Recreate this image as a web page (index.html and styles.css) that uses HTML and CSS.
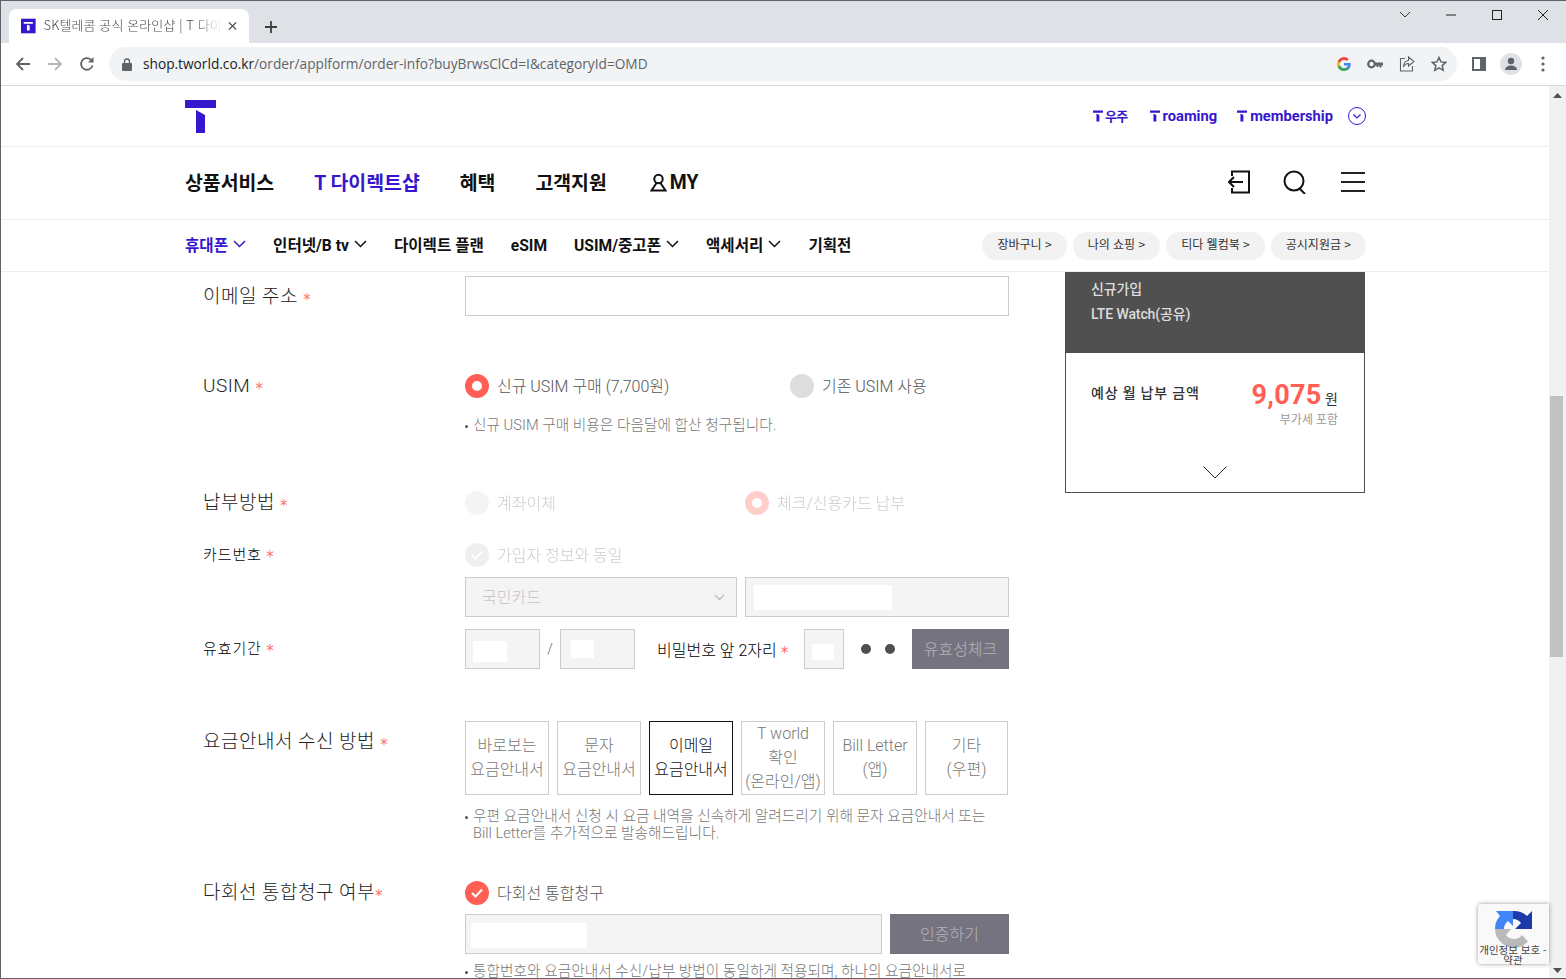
FILE: index.html
```html
<!DOCTYPE html>
<html lang="ko">
<head>
    <meta charset="UTF-8">
    <meta name="viewport" content="width=device-width, initial-scale=1.0">
    <title>SK텔레콤 공식 온라인샵</title>
    <link rel="stylesheet" href="styles.css">
</head>
<body>
    <div class="window">
        <!-- Browser tabs -->
        <div class="tabstrip">
            <div class="tab">
                <svg class="favicon" width="16" height="16" viewBox="0 0 16 16"><rect width="16" height="16" fill="#3617ce"/><path d="M3 3.5h10v2H3zM6.5 6.5l3 1V13h-3z" fill="#fff"/></svg>
                <span class="tab-title">SK텔레콤 공식 온라인샵 | T 다이</span>
                <svg class="tab-close" width="10" height="10" viewBox="0 0 10 10"><path d="M1 1l8 8M9 1l-8 8" stroke="#45484c" stroke-width="1.4"/></svg>
            </div>
            <svg class="new-tab" width="12" height="12" viewBox="0 0 12 12"><path d="M6 0v12M0 6h12" stroke="#3c4043" stroke-width="1.8"/></svg>
            <div class="win-controls">
                <svg width="12" height="8" viewBox="0 0 12 8"><path d="M1 1l5 5 5-5" fill="none" stroke="#333" stroke-width="1"/></svg>
                <svg width="12" height="2" viewBox="0 0 12 2"><path d="M1 1h10" stroke="#222" stroke-width="1"/></svg>
                <svg width="12" height="12" viewBox="0 0 12 12"><rect x="1.5" y="1.5" width="9" height="9" fill="none" stroke="#222" stroke-width="1"/></svg>
                <svg width="12" height="12" viewBox="0 0 12 12"><path d="M1 1l10 10M11 1L1 11" stroke="#222" stroke-width="1"/></svg>
            </div>
        </div>

        <!-- Address bar -->
        <div class="toolbar">
            <div class="nav-btns">
                <svg width="16" height="16" viewBox="0 0 16 16"><path d="M15 8H2M8 2L2 8l6 6" fill="none" stroke="#5f6368" stroke-width="1.8"/></svg>
                <svg width="16" height="16" viewBox="0 0 16 16"><path d="M1 8h13M8 2l6 6-6 6" fill="none" stroke="#b4b6b9" stroke-width="1.8"/></svg>
                <svg width="16" height="16" viewBox="0 0 16 16"><path d="M13.5 9.5A5.8 5.8 0 1 1 12 3.8" fill="none" stroke="#5f6368" stroke-width="1.8"/><path d="M14.5 1v5.5H9z" fill="#5f6368"/></svg>
            </div>
            <div class="omnibox">
                <svg width="10" height="13" viewBox="0 0 10 13"><path d="M2.5 5V3.5a2.5 2.5 0 0 1 5 0V5" fill="none" stroke="#5f6368" stroke-width="1.3"/><rect y="5" width="10" height="8" rx="1" fill="#5f6368"/></svg>
                <span class="url"><b>shop.tworld.co.kr</b>/order/applform/order-info?buyBrwsClCd=I&amp;categoryId=OMD</span>
                <div class="omni-icons">
                    <svg width="14" height="14" viewBox="0 0 14 14"><path d="M13.7 7.2c0-.5 0-.9-.1-1.300H7v2.500h3.800a3.200 3.200 0 0 1-1.400 2.100v1.700h2.300c1.300-1.200 2-3 2-5z" fill="#4285f4"/><path d="M7 14c1.900 0 3.500-.6 4.700-1.700l-2.300-1.800c-.6.400-1.400.7-2.400.7-1.800 0-3.400-1.200-3.900-2.900H.7v1.800A7 7 0 0 0 7 14z" fill="#34a853"/><path d="M3.100 8.300a4.200 4.200 0 0 1 0-2.600V3.900H.7a7 7 0 0 0 0 6.200z" fill="#fbbc05"/><path d="M7 2.800c1 0 2 .4 2.700 1.100l2-2A7 7 0 0 0 .7 3.900l2.400 1.800C3.600 4 5.200 2.800 7 2.800z" fill="#ea4335"/></svg>
                    <svg width="16" height="10" viewBox="0 0 16 10"><circle cx="4.500" cy="5" r="3.300" fill="none" stroke="#5f6368" stroke-width="2.200"/><path d="M8 3.500h8v3h-1.500v2h-2v-2h-1v1.500H9.500V6.500H8z" fill="#5f6368"/></svg>
                    <svg width="16" height="16" viewBox="0 0 16 16"><path d="M6 2.500H1.500v12.500h12V10" fill="none" stroke="#5f6368" stroke-width="1.100"/><path d="M9.500 1l5.500 4.500-5.500 4.500V7.500C7 7.500 5.500 8.500 4.500 11c0-4 2-6.500 5-6.500z" fill="none" stroke="#5f6368" stroke-width="1.100"/></svg>
                    <svg width="16" height="16" viewBox="0 0 16 16"><path d="M8 1.500l2 4.400 4.700.5-3.500 3.200 1 4.700L8 11.900l-4.200 2.400 1-4.700L1.300 6.400 6 5.900z" fill="none" stroke="#5f6368" stroke-width="1.500"/></svg>
                </div>
            </div>
            <div class="tool-icons">
                <svg width="14" height="14" viewBox="0 0 14 14"><rect x="1" y="1" width="12" height="12" fill="none" stroke="#5f6368" stroke-width="2"/><rect x="8" y="1" width="5" height="12" fill="#5f6368"/></svg>
                <span class="avatar"><svg width="14" height="14" viewBox="0 0 14 14"><circle cx="7" cy="4" r="3.200" fill="#5f6368"/><path d="M1 13c0-3 3-4.500 6-4.500s6 1.500 6 4.500z" fill="#5f6368"/></svg></span>
                <svg width="4" height="16" viewBox="0 0 4 16"><circle cx="2" cy="2" r="1.600" fill="#5f6368"/><circle cx="2" cy="8" r="1.600" fill="#5f6368"/><circle cx="2" cy="14" r="1.600" fill="#5f6368"/></svg>
            </div>
        </div>

        <div class="viewport">
            <div class="site">
                <!-- Site header -->
                <div class="top-bar">
                    <div class="wrap top-inner">
                        <svg class="logo" width="31" height="33" viewBox="0 0 31 33"><path d="M0 0h31v8H0zM11 10l9 5v18h-9z" fill="#3617ce"/></svg>
                        <div class="brand-links">
                            <a class="link-uju"><svg width="10" height="12" viewBox="0 0 11 12"><path d="M0 0h11v2.500H0zM3.800 3.500l3.200 1.500v7H3.800z" fill="#3617ce"/></svg><span class="ko">우주</span></a>
                            <a><svg width="10" height="12" viewBox="0 0 11 12"><path d="M0 0h11v2.500H0zM3.800 3.500l3.200 1.500v7H3.800z" fill="#3617ce"/></svg>roaming</a>
                            <a><svg width="10" height="12" viewBox="0 0 11 12"><path d="M0 0h11v2.500H0zM3.800 3.500l3.200 1.500v7H3.800z" fill="#3617ce"/></svg>membership</a>
                            <svg class="more" width="18" height="18" viewBox="0 0 18 18"><circle cx="9" cy="9" r="8.500" fill="none" stroke="#3617ce"/><path d="M5.500 7.500L9 11l3.500-3.500" fill="none" stroke="#3617ce" stroke-width="1.200"/></svg>
                        </div>
                    </div>
                </div>

                <div class="gnb">
                    <div class="wrap gnb-inner">
                        <nav class="gnb-menu">
                            <a>상품서비스</a>
                            <a class="on">T 다이렉트샵</a>
                            <a>혜택</a>
                            <a>고객지원</a>
                            <a class="my"><svg width="17" height="19" viewBox="0 0 17 19"><circle cx="8.500" cy="6" r="4.200" fill="none" stroke="#111" stroke-width="2"/><path d="M6.500 10L1.500 17.500h14L10.500 10" fill="none" stroke="#111" stroke-width="2"/></svg>MY</a>
                        </nav>
                        <div class="gnb-icons">
                            <svg width="22" height="24" viewBox="0 0 22 24"><path d="M4 6V1.500h17v21H4V18" fill="none" stroke="#111" stroke-width="2"/><path d="M15 12H1.500M6 7l-5 5 5 5" fill="none" stroke="#111" stroke-width="2"/></svg>
                            <svg width="24" height="24" viewBox="0 0 24 24"><circle cx="11" cy="11" r="9.500" fill="none" stroke="#111" stroke-width="2"/><path d="M16 18l6 6" stroke="#111" stroke-width="2"/></svg>
                            <svg width="24" height="20" viewBox="0 0 24 20"><path d="M0 1h24M0 10h24M0 19h24" stroke="#222" stroke-width="2"/></svg>
                        </div>
                    </div>
                </div>

                <div class="sub-nav">
                    <div class="wrap sub-inner">
                        <nav class="sub-menu">
                            <a class="on">휴대폰<svg width="13" height="8" viewBox="0 0 13 8"><path d="M1 1l5.500 5.500L12 1" fill="none" stroke="#3617ce" stroke-width="1.500"/></svg></a>
                            <a>인터넷/B tv<svg width="13" height="8" viewBox="0 0 13 8"><path d="M1 1l5.500 5.500L12 1" fill="none" stroke="#111" stroke-width="1.500"/></svg></a>
                            <a>다이렉트 플랜</a>
                            <a class="esim">eSIM</a>
                            <a>USIM/중고폰<svg width="13" height="8" viewBox="0 0 13 8"><path d="M1 1l5.500 5.500L12 1" fill="none" stroke="#111" stroke-width="1.500"/></svg></a>
                            <a>액세서리<svg width="13" height="8" viewBox="0 0 13 8"><path d="M1 1l5.500 5.500L12 1" fill="none" stroke="#111" stroke-width="1.500"/></svg></a>
                            <a>기획전</a>
                        </nav>
                        <div class="pills">
                            <a class="pill">장바구니 &gt;</a>
                            <a class="pill">나의 쇼핑 &gt;</a>
                            <a class="pill">티다 웰컴북 &gt;</a>
                            <a class="pill">공시지원금 &gt;</a>
                        </div>
                    </div>
                </div>

                <!-- Order form -->
                <div class="wrap content">
                    <div class="form">
                        <div class="row row-email">
                            <div class="label">이메일 주소 <i>*</i></div>
                            <div class="field"><div class="input tall"></div></div>
                        </div>

                        <div class="row row-usim">
                            <div class="label">USIM <i>*</i></div>
                            <div class="field">
                                <div class="radios wide">
                                    <span class="radio"><span class="dot on"></span>신규 USIM 구매 (7,700원)</span>
                                    <span class="radio"><span class="dot off"></span>기존 USIM 사용</span>
                                </div>
                                <p class="note note-usim">신규 USIM 구매 비용은 다음달에 합산 청구됩니다.</p>
                            </div>
                        </div>

                        <div class="row row-pay">
                            <div class="label">납부방법 <i>*</i></div>
                            <div class="field">
                                <div class="radios narrow disabled">
                                    <span class="radio"><span class="dot off"></span>계좌이체</span>
                                    <span class="radio"><span class="dot on"></span>체크/신용카드 납부</span>
                                </div>
                            </div>
                        </div>

                        <div class="row row-card">
                            <div class="label small">카드번호 <i>*</i></div>
                            <div class="field">
                                <div class="radios disabled">
                                    <span class="radio"><span class="dot check"><svg width="14" height="12" viewBox="0 0 14 12"><path d="M2 6l3.500 3.500L12 2.500" fill="none" stroke="#fff" stroke-width="2"/></svg></span>가입자 정보와 동일</span>
                                </div>
                                <div class="card-line">
                                    <div class="input select"><span class="select-text">국민카드</span><svg width="11" height="7" viewBox="0 0 11 7"><path d="M1 1l4.500 4.500L10 1" fill="none" stroke="#bbb" stroke-width="1.300"/></svg></div>
                                    <div class="input grey card-no"><span class="mask mask-card"></span></div>
                                </div>
                            </div>
                        </div>

                        <div class="row row-exp">
                            <div class="label small">유효기간 <i>*</i></div>
                            <div class="field exp-line">
                                <div class="input grey exp exp-mm"><span class="mask mask-mm"></span></div>
                                <span class="slash">/</span>
                                <div class="input grey exp exp-yy"><span class="mask mask-yy"></span></div>
                                <span class="pw-label">비밀번호 앞 2자리 <i>*</i></span>
                                <div class="input grey pw"><span class="mask mask-pw"></span></div>
                                <span class="pw-dots"><b></b><b></b></span>
                                <button class="btn-grey check-btn">유효성체크</button>
                            </div>
                        </div>

                        <div class="row row-bill">
                            <div class="label">요금안내서 수신 방법 <i>*</i></div>
                            <div class="field">
                                <div class="bill-opts">
                                    <span class="bill">바로보는<br>요금안내서</span>
                                    <span class="bill">문자<br>요금안내서</span>
                                    <span class="bill sel">이메일<br>요금안내서</span>
                                    <span class="bill">T world<br>확인<br>(온라인/앱)</span>
                                    <span class="bill">Bill Letter<br>(앱)</span>
                                    <span class="bill">기타<br>(우편)</span>
                                </div>
                                <p class="note note-bill">우편 요금안내서 신청 시 요금 내역을 신속하게 알려드리기 위해 문자 요금안내서 또는<br>Bill Letter를 추가적으로 발송해드립니다.</p>
                            </div>
                        </div>

                        <div class="row row-multi">
                            <div class="label">다회선 통합청구 여부<i>*</i></div>
                            <div class="field">
                                <div class="radios">
                                    <span class="radio"><span class="dot check red"><svg width="14" height="12" viewBox="0 0 14 12"><path d="M2 6l3.500 3.500L12 2.500" fill="none" stroke="#fff" stroke-width="2"/></svg></span>다회선 통합청구</span>
                                </div>
                                <div class="multi-line">
                                    <div class="input grey multi-no"><span class="mask mask-multi"></span></div>
                                    <button class="btn-grey auth-btn">인증하기</button>
                                </div>
                                <p class="note note-multi">통합번호와 요금안내서 수신/납부 방법이 동일하게 적용되며, 하나의 요금안내서로</p>
                            </div>
                        </div>
                    </div>

                    <!-- Order summary -->
                    <aside class="summary">
                        <div class="summary-head">
                            <p>신규가입</p>
                            <p>LTE Watch(공유)</p>
                        </div>
                        <div class="summary-body">
                            <div class="price-line">
                                <span class="price-label">예상 월 납부 금액</span>
                                <span class="price"><strong>9,075</strong> 원</span>
                            </div>
                            <p class="vat">부가세 포함</p>
                            <svg class="summary-arrow" width="24" height="13" viewBox="0 0 24 13"><path d="M.5.5L12 12 23.500.5" fill="none" stroke="#222"/></svg>
                        </div>
                    </aside>
                </div>
            </div>

            <div class="scrollbar">
                <svg width="9" height="5" viewBox="0 0 9 5"><path d="M4.500 0L9 5H0z" fill="#505050"/></svg>
                <div class="thumb"></div>
                <svg width="9" height="5" viewBox="0 0 9 5"><path d="M0 0h9L4.500 5z" fill="#505050"/></svg>
            </div>
        </div>

        <!-- reCAPTCHA badge -->
        <div class="recaptcha">
            <svg width="38" height="38" viewBox="0 0 38 38"><path d="M0 19A19 19 0 0 0 33 31.500L27 25A10 10 0 0 1 11 25l5-6z" fill="#bababa"/><path d="M0 19A19 19 0 0 1 5 6L1 1h17v15l-5-5a10 10 0 0 0-4 8z" fill="#4285f4"/><path d="M18 1a19 19 0 0 1 14 5l5-5v18H20l6-6a10 10 0 0 0-8-4z" fill="#1c3aa9"/></svg>
            <span class="rc-text">개인정보 보호 - 약관</span>
        </div>
    </div>
</body>
</html>
```

FILE: styles.css
```css
/* Page reset */
* {
    box-sizing: border-box;
}

html,
body {
    margin: 0;
    padding: 0;
    overflow: hidden;
}

body {
    font-family: Roboto, "Noto Sans CJK KR", sans-serif;
    color: #111;
    background-color: #fff;
}

a {
    color: inherit;
    text-decoration: none;
}

p {
    margin: 0;
}

.window {
    position: relative;
    display: flex;
    flex-direction: column;
    width: 1566px;
    height: 979px;
    overflow: hidden;
    border-top: 1px solid #5f6368;
    border-left: 1px solid #5f6368;
    border-bottom: 1px solid #5f6368;
}

/* Browser tabs */
.tabstrip {
    display: flex;
    align-items: flex-end;
    flex: 0 0 42px;
    padding-left: 8px;
    background-color: #dee1e6;
}

.tab {
    display: flex;
    align-items: center;
    width: 240px;
    height: 34px;
    padding: 0 12px;
    background-color: #fff;
    border-radius: 8px 8px 0 0;
}

.tab-title {
    flex: 1;
    margin-left: 8px;
    padding-bottom: 3px;
    font-family: "Noto Sans CJK KR", sans-serif;
    font-size: 13px;
    font-weight: 300;
    letter-spacing: 0.1px;
    color: #45484c;
    white-space: nowrap;
    -webkit-mask-image: linear-gradient(to right, #000 85%, transparent 100%);
    mask-image: linear-gradient(to right, #000 85%, transparent 100%);
}

.tab-close {
    margin-left: 6px;
}

.new-tab {
    margin: 0 0 10px 16px;
}

.win-controls {
    display: flex;
    align-items: center;
    justify-content: space-between;
    align-self: flex-start;
    width: 150px;
    height: 28px;
    margin-left: auto;
    margin-right: 17px;
}

/* Address bar */
.toolbar {
    display: flex;
    align-items: center;
    flex: 0 0 43px;
    background-color: #fff;
    border-bottom: 1px solid #d8d8d8;
}

.nav-btns {
    display: flex;
    gap: 16px;
    padding-left: 14px;
    width: 108px;
}

.omnibox {
    display: flex;
    align-items: center;
    width: 1348px;
    height: 34px;
    padding: 0 10px 0 13px;
    background-color: #f1f3f4;
    border-radius: 17px;
}

.url {
    margin-left: 11px;
    padding-bottom: 2px;
    font-family: "Open Sans", sans-serif;
    font-size: 13.7px;
    color: #5f6368;
    white-space: nowrap;
}

.url b {
    font-weight: 400;
    color: #202124;
}

.omni-icons {
    display: flex;
    align-items: center;
    gap: 16px;
    margin-left: auto;
}

.tool-icons {
    display: flex;
    align-items: center;
    gap: 14px;
    padding-left: 15px;
}

.avatar {
    display: flex;
    align-items: center;
    justify-content: center;
    width: 22px;
    height: 22px;
    margin-right: 5px;
    border-radius: 50%;
    background-color: #dee1e6;
}

/* Page area */
.viewport {
    display: flex;
    flex: 1;
    min-height: 0;
}

.site {
    flex: 1;
    min-width: 0;
    overflow: hidden;
}

.wrap {
    width: 1181px;
    margin-left: 184px;
}

/* Site header */
.top-bar {
    height: 61px;
    border-bottom: 1px solid #eee;
}

.top-inner {
    display: flex;
    align-items: flex-start;
    justify-content: space-between;
    padding-top: 14px;
}

.logo {
    display: block;
}

.brand-links {
    display: flex;
    align-items: center;
    gap: 20px;
    margin-top: 6px;
    color: #3617ce;
    font-size: 14.7px;
    font-weight: 700;
}

.brand-links a {
    display: flex;
    align-items: center;
    gap: 3px;
}

.brand-links .link-uju {
    gap: 2px;
    margin-right: 2px;
}

.brand-links .ko {
    font-size: 13px;
    letter-spacing: -0.7px;
}

.brand-links .more {
    margin-left: -5px;
}

.gnb {
    height: 73px;
    border-bottom: 1px solid #eee;
}

.gnb-inner {
    display: flex;
    align-items: center;
    justify-content: space-between;
    height: 100%;
    padding: 0 1px 2px 0;
}

.gnb-menu {
    display: flex;
    align-items: center;
    gap: 40px;
    margin-bottom: 2px;
    font-size: 19.4px;
    font-weight: 700;
}

.gnb-menu .on {
    color: #3617ce;
}

.my {
    display: flex;
    align-items: center;
    gap: 3px;
    margin-left: 3px;
    margin-top: 3px;
}

.gnb-icons {
    display: flex;
    align-items: center;
    gap: 33px;
}

.gnb-icons svg:last-child {
    margin-left: 1px;
}

.sub-nav {
    height: 52px;
    border-bottom: 1px solid #eee;
}

.sub-inner {
    display: flex;
    align-items: center;
    justify-content: space-between;
    height: 100%;
}

.sub-menu {
    display: flex;
    align-items: center;
    gap: 27px;
    margin-bottom: 3px;
    font-size: 15.6px;
    font-weight: 700;
}

.sub-menu a {
    display: flex;
    align-items: center;
    gap: 5px;
}

.sub-menu .on {
    color: #3617ce;
}

.sub-menu .esim {
    margin-top: 3px;
}

.pills {
    display: flex;
    gap: 6px;
}

.pill {
    height: 28px;
    padding: 0 15px;
    font-family: "Noto Sans CJK KR", sans-serif;
    font-size: 12px;
    line-height: 24px;
    color: #333;
    background-color: #f2f2f2;
    border-radius: 14px;
    white-space: nowrap;
}

/* Order form */
.content {
    display: flex;
    align-items: flex-start;
}

.form {
    width: 824px;
    padding-left: 18px;
    font-weight: 300;
}

.row {
    display: flex;
}

.label {
    flex: 0 0 262px;
    font-size: 19px;
    line-height: 24px;
    letter-spacing: 0.5px;
    color: #222;
    white-space: nowrap;
}

.label.small {
    font-size: 15px;
    letter-spacing: 0.9px;
    color: #000;
}

.label i,
.pw-label i {
    font-family: "DejaVu Sans", sans-serif;
    font-size: 15px;
    font-style: normal;
    font-weight: 400;
    letter-spacing: 0;
    vertical-align: -2px;
    color: #ff6f66;
}

.field {
    flex: 1;
    min-width: 0;
}

.row-email {
    margin-top: 4px;
    align-items: flex-start;
}

.row-email .label {
    padding-top: 9px;
}

.row-usim {
    margin-top: 58px;
}

.row-pay {
    margin-top: 57px;
}

.row-card {
    margin-top: 25px;
}

.row-exp {
    margin-top: 12px;
}

.row-exp .label {
    padding-top: 8px;
}

.row-bill {
    margin-top: 52px;
}

.row-bill .label {
    padding-top: 9px;
}

.row-multi {
    margin-top: 39px;
}

.input {
    height: 40px;
    background-color: #fff;
    border: 1px solid #ccc;
}

.input.grey,
.input.select {
    background-color: #f4f4f4;
}

.radios {
    display: flex;
    height: 24px;
}

.radios .radio {
    display: flex;
    align-items: flex-start;
    gap: 8px;
    height: 24px;
    font-size: 16px;
    line-height: 26px;
    color: #555;
    white-space: nowrap;
}

.radios.wide .radio:first-child {
    width: 325px;
}

.radios.narrow .radio:first-child {
    width: 280px;
}

.radios.disabled {
    opacity: 0.3;
}

.dot {
    display: flex;
    align-items: center;
    justify-content: center;
    flex: 0 0 24px;
    width: 24px;
    height: 24px;
    border-radius: 50%;
}

.dot.on {
    background-color: #fff;
    border: 7px solid #ff5f55;
}

.dot.off {
    background-color: #ddd;
}

.dot.check {
    background-color: #ccc;
}

.dot.check.red {
    background-color: #ff5f55;
}

.note {
    position: relative;
    padding-left: 8px;
    font-size: 14.7px;
    line-height: 17px;
    color: #777;
}

.note::before {
    content: "";
    position: absolute;
    left: 0;
    top: 8px;
    width: 3px;
    height: 3px;
    border-radius: 50%;
    background-color: #555;
}

.note-usim {
    margin-top: 19px;
}

.note-bill {
    margin-top: 13px;
    white-space: nowrap;
}

.note-multi {
    margin-top: 9px;
    white-space: nowrap;
}

.card-line {
    display: flex;
    gap: 8px;
    margin-top: 10px;
}

.select {
    display: flex;
    align-items: center;
    justify-content: space-between;
    width: 272px;
    padding: 0 11px 0 16px;
    font-size: 16px;
    color: #c4c4c4;
}

.select-text {
    padding-bottom: 3px;
}

.card-no {
    flex: 1;
    padding: 7px 8px;
}

.mask {
    display: block;
    background-color: #fff;
}

.mask-card {
    width: 138px;
    height: 25px;
}

.exp-line {
    display: flex;
    align-items: center;
}

.exp {
    width: 75px;
}

.exp-mm {
    padding: 11px 7px;
}

.exp-yy {
    padding: 10px;
}

.mask-mm {
    width: 34px;
    height: 21px;
}

.mask-yy {
    width: 23px;
    height: 18px;
}

.slash {
    width: 20px;
    text-align: center;
    font-size: 14px;
    color: #666;
}

.pw-label {
    margin-left: 22px;
    width: 147px;
    font-size: 16px;
    color: #000;
    white-space: nowrap;
}

.pw {
    width: 40px;
    padding: 14px 7px;
}

.mask-pw {
    width: 22px;
    height: 16px;
}

.pw-dots {
    display: flex;
    gap: 14px;
    margin-left: 17px;
}

.pw-dots b {
    width: 10px;
    height: 10px;
    border-radius: 50%;
    background-color: #4f4f4f;
}

.btn-grey {
    height: 40px;
    padding: 0 0 2px;
    font-family: inherit;
    font-size: 16px;
    font-weight: 300;
    color: #b5b3ba;
    background-color: #767380;
    border: none;
}

.check-btn {
    width: 97px;
    margin-left: auto;
}

.bill-opts {
    display: flex;
    gap: 8px;
}

.bill {
    display: flex;
    align-items: center;
    justify-content: center;
    flex: 0 0 84px;
    height: 74px;
    font-size: 16px;
    line-height: 24px;
    text-align: center;
    color: #777;
    border: 1px solid #ccc;
    white-space: nowrap;
}

.bill:last-child {
    flex-basis: 83px;
}

.bill.sel {
    color: #111;
    border-color: #111;
}

.multi-line {
    display: flex;
    gap: 8px;
    margin-top: 9px;
}

.multi-no {
    flex: 1;
    padding: 8px 5px;
}

.mask-multi {
    width: 116px;
    height: 25px;
}

.auth-btn {
    width: 119px;
}

/* Order summary */
.summary {
    flex: 0 0 300px;
    margin-left: 56px;
}

.summary-head {
    height: 81px;
    padding: 5px 26px 0;
    font-size: 14px;
    font-weight: 500;
    line-height: 25px;
    letter-spacing: -0.1px;
    color: #ddd;
    background-color: #505050;
}

.summary-body {
    height: 140px;
    padding: 26px 26px 0 25px;
    border: 1px solid #4f4f4f;
    border-top: none;
    text-align: right;
}

.price-line {
    display: flex;
    align-items: flex-start;
    justify-content: space-between;
}

.price-label {
    padding-top: 3px;
    font-size: 14px;
    font-weight: 500;
    letter-spacing: 0.8px;
    color: #333;
}

.price {
    padding-top: 2px;
    font-size: 14px;
    line-height: 28px;
    color: #333;
}

.price strong {
    font-size: 27px;
    font-weight: 700;
    letter-spacing: 0.3px;
    color: #ff5f55;
}

.vat {
    margin-top: -3px;
    font-size: 12px;
    color: #999;
}

.summary-arrow {
    display: block;
    margin: 39px auto 0;
}

/* Scrollbar */
.scrollbar {
    display: flex;
    flex-direction: column;
    align-items: center;
    flex: 0 0 17px;
    padding: 7px 0 5px;
    background-color: #f1f1f1;
    position: relative;
}

.thumb {
    position: absolute;
    top: 310px;
    left: 1px;
    width: 13px;
    height: 261px;
    background-color: #c1c1c1;
}

.scrollbar svg:last-child {
    margin-top: auto;
}

/* reCAPTCHA badge */
.recaptcha {
    position: absolute;
    left: 1477px;
    top: 903px;
    display: flex;
    justify-content: center;
    width: 71px;
    height: 60px;
    padding-top: 6px;
    background-color: #f9f9f9;
    border-radius: 3px 0 0 3px;
    box-shadow: 0 0 4px rgba(0, 0, 0, 0.4);
}

.rc-text {
    position: absolute;
    left: 1px;
    top: 41px;
    width: 68px;
    font-family: "Noto Sans CJK KR", sans-serif;
    font-size: 10.5px;
    line-height: 10px;
    text-align: center;
    color: #444;
}
```
